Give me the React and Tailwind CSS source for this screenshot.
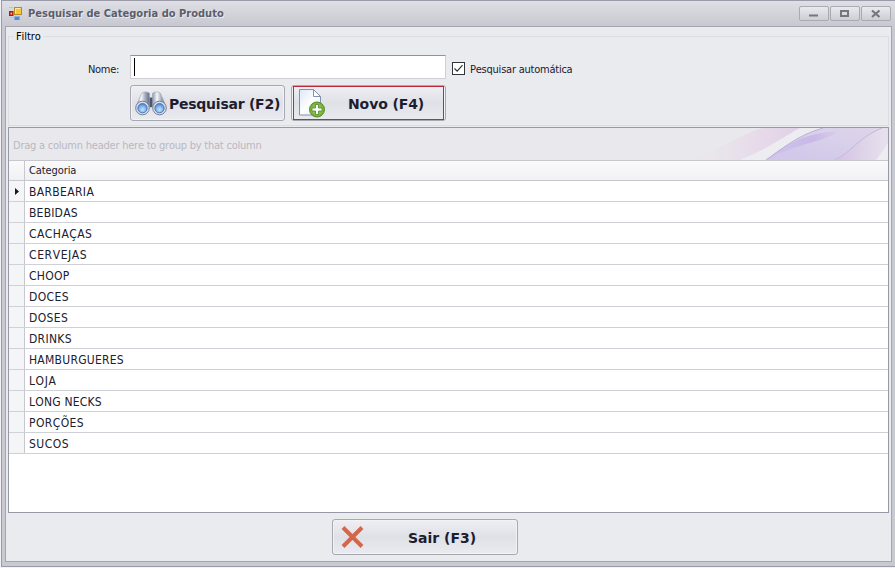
import React from "react";

const rows = [
  ["BARBEARIA", "tracking-[0.35px]"],
  ["BEBIDAS", "tracking-[0.2px]"],
  ["CACHAÇAS", "tracking-[0.45px]"],
  ["CERVEJAS", "tracking-[0.6px]"],
  ["CHOOP", "tracking-[0.3px]"],
  ["DOCES", "tracking-[0.4px]"],
  ["DOSES", "tracking-[0.4px]"],
  ["DRINKS", "tracking-[0.3px]"],
  ["HAMBURGUERES", "tracking-[0.25px]"],
  ["LOJA", "tracking-[0.6px]"],
  ["LONG NECKS", "tracking-[0.2px]"],
  ["PORÇÕES", "tracking-[0.4px]"],
  ["SUCOS", "tracking-[0.5px]"],
];

function AppIcon() {
  return (
    <svg className="ml-[4px] mt-[5px] h-[15px] w-[14px] shrink-0" viewBox="0 0 14 15">
      <rect x="5.5" y="1.5" width="7" height="7" fill="#f5c53a" stroke="#b88a22" />
      <path d="M6.500 7.500V2.500h5" fill="none" stroke="#ffe99a" />
      <rect x="0.500" y="5.500" width="3.500" height="4" fill="#c33323" stroke="#a32016" />
      <rect x="1.700" y="6.700" width="1.300" height="1.800" fill="#f8b0a0" />
      <path d="M0 1.500h4M.5 11.500h4" stroke="#c1c1c6" fill="none" />
      <rect x="5.500" y="10" width="5" height="4" fill="#5286d4" />
      <path d="M5.500 10.500h5" stroke="#88b5ed" />
    </svg>
  );
}

function Caption({ children }) {
  return (
    <div className="h-[15px] w-[30px] rounded-[2px] border border-[#a9aab2] bg-linear-to-b from-[#e9e9ee] to-[#cdced5]">
      <svg className="h-[13px] w-[28px]" viewBox="0 0 28 13" fill="none" stroke="#747681">
        {children}
      </svg>
    </div>
  );
}

function Binoculars() {
  return (
    <svg className="h-[25px] w-[32px] shrink-0" viewBox="0 0 32 25">
      <defs>
        <linearGradient id="tube">
          <stop offset="0" stopColor="#8c96ab" />
          <stop offset=".35" stopColor="#f6f8fb" />
          <stop offset=".65" stopColor="#a9b1c2" />
          <stop offset="1" stopColor="#626d85" />
        </linearGradient>
        <radialGradient id="lens" cx=".5" cy=".65" r=".6">
          <stop offset="0" stopColor="#c5e4ff" />
          <stop offset=".6" stopColor="#83b5f0" />
          <stop offset="1" stopColor="#4f86d0" />
        </radialGradient>
      </defs>
      <path d="M13 6.500h6v8l-3 2-3-2z" fill="#4c566c" />
      <path d="M6.500 2.500C7.500.5 13.500.5 14.500 2.500V15l-5 4-8-5z" fill="url(#tube)" stroke="#9ba4b6" strokeWidth=".6" />
      <path d="M17.500 2.500C18.500.5 24.500.5 25.500 2.500l5 11.500-8 5-5-4z" fill="url(#tube)" stroke="#9ba4b6" strokeWidth=".6" />
      <circle cx="7.500" cy="17" r="6.800" fill="#d9dfea" stroke="#737f99" />
      <circle cx="24.500" cy="17" r="6.800" fill="#d9dfea" stroke="#737f99" />
      <circle cx="7.500" cy="17.200" r="4.600" fill="url(#lens)" stroke="#4a76b4" />
      <circle cx="24.500" cy="17.200" r="4.600" fill="url(#lens)" stroke="#4a76b4" />
    </svg>
  );
}

function NewPage() {
  return (
    <svg className="h-[30px] w-[28px] shrink-0" viewBox="0 0 28 30">
      <defs>
        <linearGradient id="paper" x1="0" y1="0" x2="1" y2="1">
          <stop offset="0" stopColor="#dde7f6" />
          <stop offset=".5" stopColor="#fdfefe" />
          <stop offset="1" stopColor="#e5edf7" />
        </linearGradient>
        <radialGradient id="green">
          <stop offset="0" stopColor="#a6d45b" />
          <stop offset="1" stopColor="#6fae35" />
        </radialGradient>
      </defs>
      <path d="M1.5 1.5h14l7 7v18.500h-21z" fill="url(#paper)" stroke="#8192ad" />
      <path d="M15.500 1.500v7h7z" fill="#fff" stroke="#8192ad" />
      <circle cx="19" cy="21.500" r="7.500" fill="url(#green)" stroke="#568d2b" />
      <path d="M17.500 16.500h3v3.500h3.500v3h-3.500v3.500h-3v-3.500h-3.500v-3h3.500z" fill="#fff" stroke="#4c8a23" strokeWidth=".8" />
    </svg>
  );
}

function Waves() {
  return (
    <svg className="h-[32px] w-[240px]" viewBox="0 0 240 32" preserveAspectRatio="none">
      <defs>
        <linearGradient id="pink" gradientUnits="userSpaceOnUse" x1="30" y1="0" x2="150" y2="0">
          <stop offset="0" stopColor="#eae6ec" stopOpacity="0" />
          <stop offset=".65" stopColor="#e7dbea" />
          <stop offset="1" stopColor="#e0d2e7" />
        </linearGradient>
        <linearGradient id="violet" x1="0" y1="1" x2="1" y2="0">
          <stop offset="0" stopColor="#cfc6ea" />
          <stop offset=".45" stopColor="#d6cdea" />
          <stop offset="1" stopColor="#dfd6ea" />
        </linearGradient>
        <linearGradient id="sweep" gradientUnits="userSpaceOnUse" x1="118" y1="32" x2="200" y2="2">
          <stop offset="0" stopColor="#cfc4ea" />
          <stop offset=".6" stopColor="#c8b9e6" />
          <stop offset="1" stopColor="#d8cdea" stopOpacity=".3" />
        </linearGradient>
        <linearGradient id="petal" gradientUnits="userSpaceOnUse" x1="190" y1="20" x2="235" y2="20">
          <stop offset="0" stopColor="#d4c4e5" />
          <stop offset="1" stopColor="#e6dfec" />
        </linearGradient>
      </defs>
      <path d="M30 32C75 24 85 8 115 0h37C137 8 122 20 92 32z" fill="url(#pink)" />
      <path d="M92 32C122 20 137 8 152 0h23C149 7 130 24 118 32z" fill="#ececf1" />
      <path d="M118 32C130 24 149 7 175 0h65v14l-11 18z" fill="url(#violet)" />
      <path d="M118 32C140 14 160 5 190 3c-12 11-35 10-72 29z" fill="url(#sweep)" />
      <path d="M118 32C130 24 149 7 175 0" fill="none" stroke="#bcb0dc" />
      <path d="M187 32C206 22 210 10 234 0h6v14l-12 18z" fill="url(#petal)" />
      <path d="M187 32C206 22 210 10 234 0" fill="none" stroke="#c7b8dc" />
      <path d="M240 15v17h-12z" fill="#eeedf2" />
    </svg>
  );
}

const button =
  "flex h-[36px] rounded-[3px] border border-[#a7a8b1] bg-linear-to-b from-[#eeeff3] via-[#e0e1e7] to-[#eaebef] font-['DejaVu_Sans',sans-serif] text-[14px] font-bold text-[#1d1d30] shadow-[inset_0_0_0_1px_#f3f3f6] [font-stretch:normal]";

export default function App() {
  return (
    <div className="flex h-[568px] w-[895px] flex-col overflow-hidden bg-[#f3f3f7] pl-px font-['DejaVu_Sans_Condensed','DejaVu_Sans',sans-serif] text-[11px] text-[#20202f] [font-kerning:none] [font-stretch:condensed]">
      <div className="flex h-[567px] flex-col border-b border-l border-t border-[#9a9ba8] bg-[#c8c9d1] pb-[4px] pl-[3px] pr-[3px]">
        <header className="-ml-[3px] -mr-[3px] flex h-[25px] shrink-0 bg-linear-to-b from-[#dfdfe5] to-[#c7c8d0] pl-[3px] pr-[4px]">
          <AppIcon />
          <h1 className="ml-[5px] mt-[5px] w-[300px] whitespace-nowrap text-[11px] font-bold leading-[16px] tracking-[0.02px] text-[#5c5d6b] [text-shadow:1px_1px_0_#e9e9ee]">
            Pesquisar de Categoria do Produto
          </h1>
          <div className="ml-auto mt-[5px] flex gap-px">
            <Caption><path d="M9 8.500h9" strokeWidth="2" /></Caption>
            <Caption><rect x="10" y="4" width="7" height="5" strokeWidth="2" /></Caption>
            <Caption><path d="M10 3.500l7.500 6.500m0-6.500l-7.500 6.500" strokeWidth="2.200" /></Caption>
          </div>
        </header>
        <main className="flex min-h-0 grow flex-col border border-[#a4a5b1] bg-[#eaebef] px-[2px]">
          <fieldset className="mt-[3px] h-[96px] shrink-0 border border-[#dcdde2] pl-[79px]">
            <legend className="-ml-[74px] h-[12px] px-[2px] leading-[13px] tracking-[-0.1px] text-black">Filtro</legend>
            <div className="mt-[13px] flex h-[24px]">
              <label className="w-[42px] whitespace-nowrap pt-[6px] leading-[17px] tracking-[-0.3px]">Nome:</label>
              <div className="h-[24px] w-[316px] border border-[#cfd0d6] border-t-[#91929e] bg-white pl-[3px] pt-[2px]">
                <div className="h-[18px] w-px bg-black" />
              </div>
              <div className="ml-[6px] mt-[7px] h-[13px] w-[13px] border border-[#34343c] bg-white">
                <svg viewBox="0 0 11 11" className="h-[11px] w-[11px]"><path d="M1.500 5.500l2.700 2.700 5.300-6" fill="none" stroke="#333" strokeWidth="1.200" /></svg>
              </div>
              <span className="ml-[5px] whitespace-nowrap pt-[6px] leading-[17px] tracking-[-0.23px]">Pesquisar automática</span>
            </div>
            <div className="ml-[42px] mt-[6px] flex gap-[6px]">
              <button className={`${button} w-[155px] items-center pl-[4px]`}>
                <Binoculars />
                <span className="ml-[2px] whitespace-nowrap pt-[2px] tracking-[-0.25px]">Pesquisar (F2)</span>
              </button>
              <button className={`${button} w-[155px] p-px`}>
                <span className="-mt-px flex h-[34px] w-[151px] shrink-0 items-center pl-[5px] shadow-[inset_0_0_0_1px_#bd2b3a]">
                  <NewPage />
                  <span className="ml-[22px] whitespace-nowrap pt-[2px] tracking-[-0.1px]">Novo (F4)</span>
                </span>
              </button>
            </div>
          </fieldset>
          <section className="mt-px flex h-[386px] w-[881px] shrink-0 flex-col border border-[#9899a6] bg-white">
            <div className="flex h-[32px] shrink-0 items-center justify-between bg-[#e9e9ed] pl-[4px]">
              <span className="whitespace-nowrap pt-[4px] tracking-[-0.23px] text-[#b8b8bf]">Drag a column header here to group by that column</span>
              <Waves />
            </div>
            <div className="flex h-[21px] shrink-0 border-y border-[#c7c8ce] bg-linear-to-b from-[#fafafb] to-[#f0f1f4]">
              <div className="w-[16px] border-r border-[#c7c8ce]" />
              <span className="pl-[4px] leading-[20px] tracking-[-0.1px]">Categoria</span>
            </div>
            {rows.map(([name, tracking], i) => (
              <div key={name} className="flex h-[21px] shrink-0 border-b border-[#d0d1d6]">
                <div className="flex w-[16px] items-center justify-center border-r border-[#c7c8ce] bg-[#f4f5f7]">
                  {i === 0 && <svg className="h-[7px] w-[4px]" viewBox="0 0 4 7"><path d="M0 0l4 3.500L0 7z" fill="#181820" /></svg>}
                </div>
                <span className={`pl-[4px] text-[12px] leading-[22px] ${tracking}`}>{name}</span>
              </div>
            ))}
          </section>
          <footer className="mt-[6px] pl-[324px]">
            <button className={`${button} w-[186px] items-center pl-[8px]`}>
              <svg className="h-[22px] w-[23px]" viewBox="0 0 23 22"><path d="M2 1.500L21 20.500M21 1.500L2 20.500" stroke="#d4674b" strokeWidth="4" /></svg>
              <span className="ml-[44px] whitespace-nowrap pt-[2px] tracking-[0px]">Sair (F3)</span>
            </button>
          </footer>
        </main>
      </div>
    </div>
  );
}
